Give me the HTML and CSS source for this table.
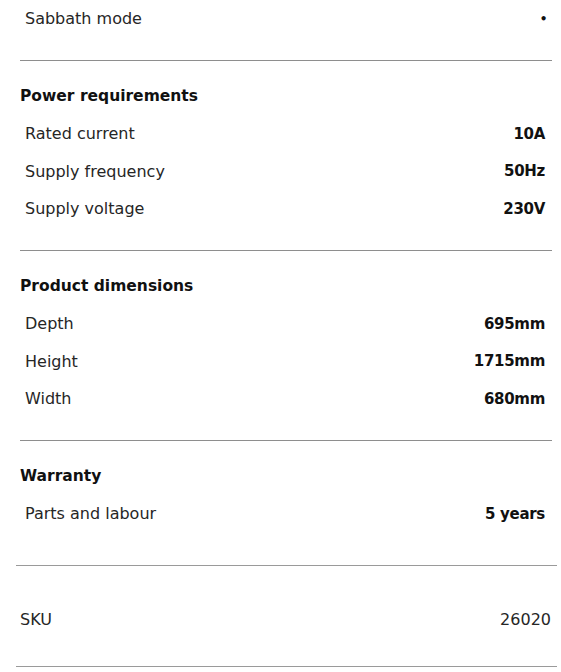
FILE: index.html
```html
<!DOCTYPE html>
<html lang="en">
<head>
<meta charset="utf-8">
<title>Specifications</title>
<link rel="stylesheet" href="styles.css">
</head>
<body>
<div class="specs">
  <section class="group group-first">
    <div class="row"><span class="label">Sabbath mode</span><span class="value dot">•</span></div>
  </section>
  <section class="group">
    <h3 class="heading">Power requirements</h3>
    <div class="row"><span class="label">Rated current</span><span class="value">10A</span></div>
    <div class="row"><span class="label">Supply frequency</span><span class="value">50Hz</span></div>
    <div class="row"><span class="label">Supply voltage</span><span class="value">230V</span></div>
  </section>
  <section class="group">
    <h3 class="heading">Product dimensions</h3>
    <div class="row"><span class="label">Depth</span><span class="value">695mm</span></div>
    <div class="row"><span class="label">Height</span><span class="value">1715mm</span></div>
    <div class="row"><span class="label">Width</span><span class="value">680mm</span></div>
  </section>
  <section class="group group-last">
    <h3 class="heading">Warranty</h3>
    <div class="row"><span class="label">Parts and labour</span><span class="value">5 years</span></div>
  </section>
</div>
<div class="sku">
  <span class="sku-label">SKU</span>
  <span class="sku-value">26020</span>
</div>
</body>
</html>
```

FILE: styles.css
```css
html, body {
  margin: 0;
  padding: 0;
  background: #ffffff;
}

body {
  font-family: "DejaVu Sans", "Liberation Sans", sans-serif;
  color: #222222;
  width: 561px;
}

.specs {
  margin: 0 9px 0 20px;
}

.group {
  padding: 23px 0 22.5px 0;
  border-bottom: 1px solid #8e8e8e;
}

.group-first {
  padding-top: 0;
}

.group-last {
  border-bottom: none;
  padding-bottom: 32px;
}

.heading {
  margin: 0 0 7px 0;
  font-size: 15.5px;
  line-height: 24px;
  font-weight: bold;
  color: #111111;
}

.row {
  display: flex;
  justify-content: space-between;
  align-items: center;
  height: 37.5px;
  padding: 0 7px 0 5px;
  font-size: 16px;
}

.label {
  color: #262626;
}

.value {
  font-weight: bold;
  font-size: 15px;
  letter-spacing: -0.3px;
  color: #111111;
}

.dot {
  font-size: 12px;
  margin-right: -2px;
}

.sku {
  margin: 0 4px 0 16px;
  border-top: 1px solid #9a9a9a;
  border-bottom: 1px solid #9a9a9a;
  padding: 42px 6px 34px 4px;
  display: flex;
  justify-content: space-between;
  align-items: center;
  font-size: 16px;
  line-height: 24px;
  color: #262626;
}
```
